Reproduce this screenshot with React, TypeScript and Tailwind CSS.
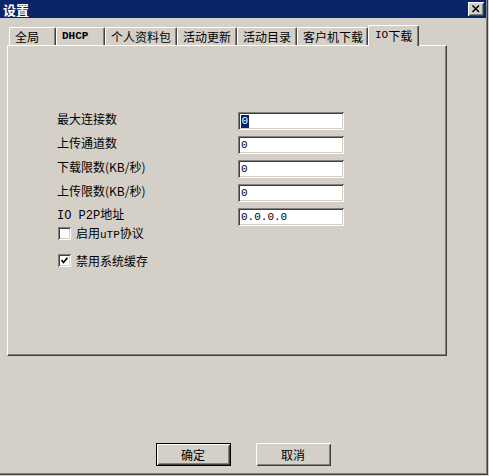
import React from "react";

const raised =
  "shadow-[inset_1px_1px_0_#ffffff,inset_-1px_-1px_0_#404040,inset_2px_2px_0_#d4d0c8,inset_-2px_-2px_0_#808080]";
const sunken =
  "shadow-[inset_1px_1px_0_#808080,inset_-1px_-1px_0_#ffffff,inset_2px_2px_0_#404040,inset_-2px_-2px_0_#d4d0c8]";

function Tab({ label, className }: { label: React.ReactNode; className: string }) {
  return (
    <div
      className={`h-[18px] border-l border-t border-r border-l-white border-t-white border-r-[#404040] rounded-tl-[2px] rounded-tr-[2px] shadow-[inset_-1px_0_0_#808080] flex items-center pl-[5px] leading-none ${className}`}
    >
      {label}
    </div>
  );
}

function Field({ label, value, selected }: { label: React.ReactNode; value: string; selected?: boolean }) {
  return (
    <div className="flex items-center h-[18px]">
      <div className="w-[181px] leading-none pb-[4px]">{label}</div>
      <div className={`w-[106px] h-[18px] bg-white ${sunken} flex items-center pl-[3px] font-['Liberation_Mono',monospace] text-[11px] leading-none`}>
        {selected ? (
          <span className="bg-[#0a246a] text-white px-[0.5px] h-[13px] flex items-center">{value}</span>
        ) : (
          <span>{value}</span>
        )}
      </div>
    </div>
  );
}

function Check({ label, checked }: { label: React.ReactNode; checked?: boolean }) {
  return (
    <div className="flex items-center h-[13px]">
      <div className={`w-[13px] h-[13px] bg-white ${sunken} flex items-center justify-center`}>
        {checked && (
          <svg width="13" height="13" viewBox="0 0 13 13">
            <polyline points="3.5,6 5.5,8.5 9.5,3.8" fill="none" stroke="#000" strokeWidth="1.7" />
          </svg>
        )}
      </div>
      <div className="ml-[5px] leading-none">{label}</div>
    </div>
  );
}

function Button({ label, isDefault }: { label: string; isDefault?: boolean }) {
  return (
    <div className={`w-[75px] h-[23px] ${isDefault ? "border border-black" : ""} bg-[#d4d0c8]`}>
      <div className={`w-full h-full ${raised} flex items-center justify-center leading-none`}>{label}</div>
    </div>
  );
}

export default function App() {
  const mono = "font-['Liberation_Mono',monospace]";
  return (
    <div className="w-[489px] h-[476px] bg-[#d4d0c8] overflow-hidden font-['Noto_Sans_CJK_SC',sans-serif] text-[12px] text-black">
      <div className="w-[488px] h-[475px] border-r border-b border-[#404040]">
        <div className="w-full h-full border-r border-b border-[#808080] flex flex-col">
          <div className="h-[18px] shrink-0 bg-[#0a246a] flex items-center justify-between pl-[3px] pr-[2px]">
            <span className="text-white font-bold text-[13px] leading-none">设置</span>
            <div className={`w-[16px] h-[14px] bg-[#d4d0c8] ${raised} flex items-center justify-center`}>
              <svg width="16" height="14" viewBox="0 0 16 14">
                <path d="M4.5 3.5 L11 10 M11 3.5 L4.5 10" stroke="#000" strokeWidth="1.6" fill="none" />
              </svg>
            </div>
          </div>

          <div className="pt-[7px] pl-[7px]">
            <div className="flex items-end h-[20px] pl-[2px]">
              <Tab label="全局" className="w-[47px]" />
              <Tab label={<span className={`${mono} font-bold text-[11px]`}>DHCP</span>} className="w-[49px]" />
              <Tab label="个人资料包" className="w-[72px]" />
              <Tab label="活动更新" className="w-[60px]" />
              <Tab label="活动目录" className="w-[60px]" />
              <Tab label="客户机下载" className="w-[71px]" />
              <div className="relative z-10 -mb-[1px] w-[51px] h-[21px] bg-[#d4d0c8] border-l border-t border-r border-l-white border-t-white border-r-[#404040] rounded-tl-[2px] rounded-tr-[2px] shadow-[inset_-1px_0_0_#808080] flex items-start pt-[3px] pl-[6px] leading-none">
                <span className={`${mono} text-[11px] leading-[13px]`}>IO</span>
                <span className="leading-[13px]">下载</span>
              </div>
            </div>

            <div className="w-[440px] h-[311px] border-l border-t border-r border-b border-l-white border-t-white border-r-[#404040] border-b-[#404040] shadow-[inset_-1px_-1px_0_#808080] pt-[66px] pl-[49px]">
              <div className="flex flex-col gap-[6px]">
                <Field label="最大连接数" value="0" selected />
                <Field label="上传通道数" value="0" />
                <Field label="下载限数(KB/秒)" value="0" />
                <Field label="上传限数(KB/秒)" value="0" />
                <Field
                  label={
                    <span>
                      <span className={`${mono} text-[12px]`}>IO P2P</span>地址
                    </span>
                  }
                  value="0.0.0.0"
                />
              </div>
              <div className="flex flex-col gap-[14px] mt-[1px] ml-[1px]">
                <Check
                  label={
                    <span>
                      启用<span className={`${mono} text-[11px]`}>uTP</span>协议
                    </span>
                  }
                />
                <Check label="禁用系统缓存" checked />
              </div>
            </div>
          </div>

          <div className="mt-[87px] flex justify-center gap-[25px]">
            <Button label="确定" isDefault />
            <Button label="取消" />
          </div>
        </div>
      </div>
    </div>
  );
}
